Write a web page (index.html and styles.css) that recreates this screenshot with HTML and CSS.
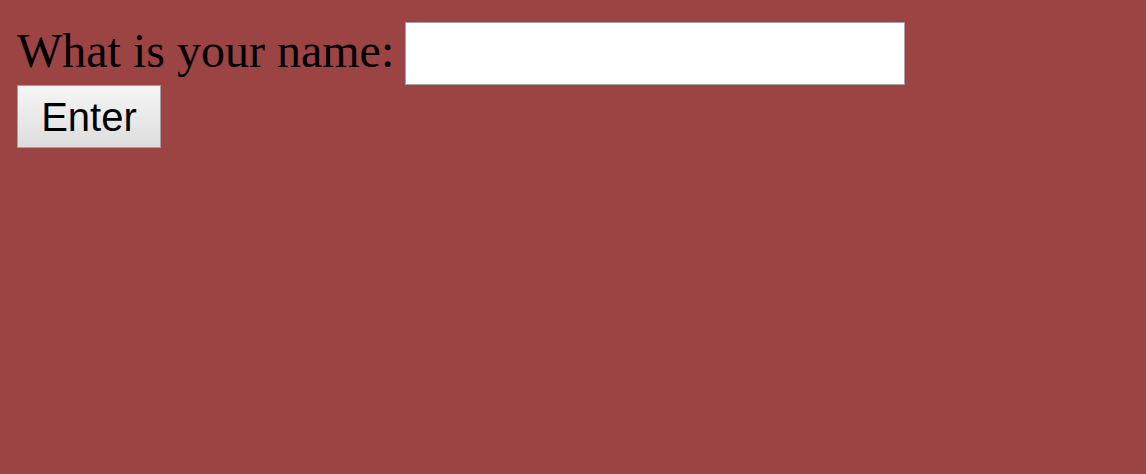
FILE: index.html
```html
<!DOCTYPE html>
<html>
<head>
<meta charset="utf-8">
<link rel="stylesheet" href="styles.css">
</head>
<body>
<form class="form">
  <div class="row">
    <label class="label" for="name">What is your name:</label>
    <input class="name-input" id="name" type="text">
  </div>
  <button class="enter-btn" type="button">Enter</button>
</form>
</body>
</html>
```
FILE: styles.css
```css
html, body {
  margin: 0;
  padding: 0;
  background: #9c4343;
}
body {
  width: 1146px;
  height: 474px;
  overflow: hidden;
}
.form {
  padding: 22px 0 0 17px;
  margin: 0;
}
.row {
  display: flex;
  align-items: flex-start;
}
.label {
  font-family: "Liberation Serif", "Times New Roman", serif;
  font-size: 48px;
  line-height: 53px;
  color: #000;
  margin-top: 2px;
  margin-right: 11px;
  white-space: nowrap;
}
.name-input {
  box-sizing: border-box;
  width: 500px;
  height: 63px;
  margin: 0;
  border: 1px solid #a3a3a3;
  background: #fff;
  font-family: "Liberation Sans", Arial, sans-serif;
  font-size: 40px;
  padding: 0 4px;
  outline: none;
}
.enter-btn {
  display: block;
  box-sizing: border-box;
  width: 144px;
  height: 63px;
  margin: 0;
  padding: 0;
  border: 1px solid #a0a0a0;
  border-radius: 0;
  background: linear-gradient(#f6f6f6, #dddddd);
  font-family: "Liberation Sans", Arial, sans-serif;
  font-size: 40px;
  color: #000;
  line-height: 1;
}
```
